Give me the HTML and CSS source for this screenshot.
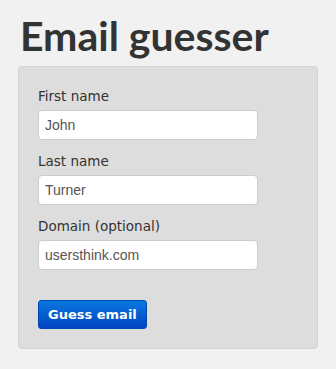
FILE: index.html
```html
<!DOCTYPE html>
<html lang="en">
<head>
    <meta charset="UTF-8">
    <meta name="viewport" content="width=device-width, initial-scale=1.0">
    <title>Email guesser</title>
    <link rel="stylesheet" href="styles.css">
</head>
<body>
    <div class="container">
        <h1>Email guesser</h1>

        <!-- guess form -->
        <form class="well">
            <label for="first">First name</label>
            <input type="text" id="first" value="John">

            <label for="last">Last name</label>
            <input type="text" id="last" value="Turner">

            <label for="domain">Domain (optional)</label>
            <input type="text" id="domain" value="usersthink.com">

            <div class="actions">
                <button type="button" class="btn">Guess email</button>
            </div>
        </form>
    </div>
</body>
</html>
```

FILE: styles.css
```css
body {
    font-family: "DejaVu Sans", sans-serif;
    background-color: #f1f1f1;
    margin: 0;
    padding: 0;
}

.container {
    width: 300px;
    padding: 12px 0 0 18px;
}

h1 {
    font-family: Lato, sans-serif;
    font-weight: bold;
    font-size: 41px;
    line-height: 48px;
    color: #333;
    margin: 0 0 6px 2px;
}

.well {
    background-color: #dddddd;
    border: 1px solid #d4d4d4;
    border-radius: 4px;
    padding: 19px;
    height: 243px;
    margin: 0;
}

.well label {
    display: block;
    font-size: 13.5px;
    line-height: 20px;
    color: #333;
    margin-bottom: 4px;
}

.well input {
    display: block;
    box-sizing: border-box;
    width: 220px;
    height: 30px;
    padding: 4px 6px;
    margin: 0 0 11px 0;
    font-family: "Liberation Sans", Arial, sans-serif;
    font-size: 14px;
    color: #555;
    background-color: #fff;
    border: 1px solid #ccc;
    border-radius: 4px;
}

.actions {
    padding-top: 19px;
}

.btn {
    font-family: "DejaVu Sans", sans-serif;
    font-weight: bold;
    font-size: 13px;
    color: #fff;
    height: 29px;
    padding: 0 9px;
    border: 1px solid #0048b0;
    border-radius: 3px;
    background: linear-gradient(#0a78e0, #0044c0);
    cursor: pointer;
}
```
